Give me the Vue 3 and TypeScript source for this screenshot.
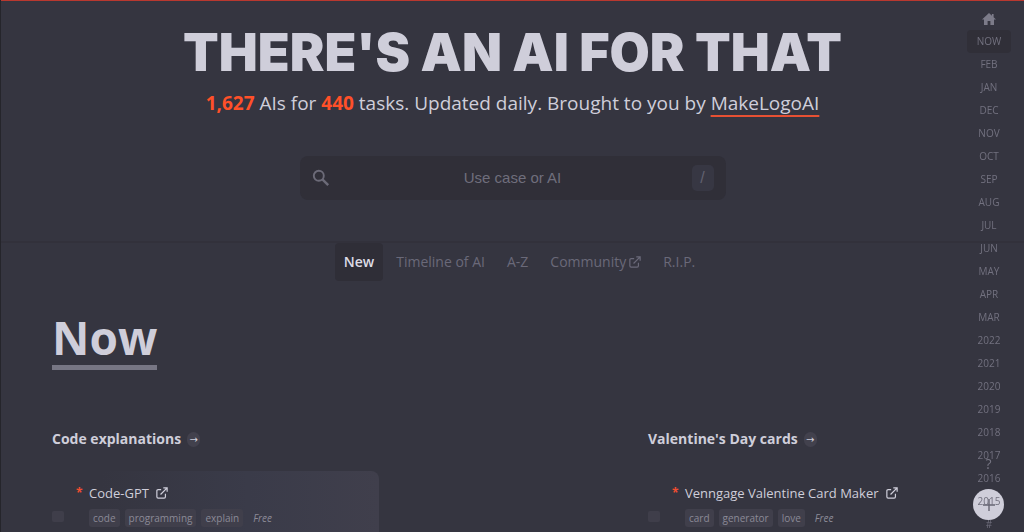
<script setup lang="ts">
import { ref } from 'vue'

interface Tool {
  id: string
  category: string
  name: string
  tags: string[]
  price: string
  featured: boolean
}

const query = ref('')
const periods: string[] = [
  'NOW', 'FEB', 'JAN', 'DEC', 'NOV', 'OCT', 'SEP', 'AUG', 'JUL', 'JUN', 'MAY',
  'APR', 'MAR', '2022', '2021', '2020', '2019', '2018', '2017', '2016', '2015', '#',
]
const tabs = [
  { label: 'New', active: true, external: false },
  { label: 'Timeline of AI', active: false, external: false },
  { label: 'A-Z', active: false, external: false },
  { label: 'Community', active: false, external: true },
  { label: 'R.I.P.', active: false, external: false },
]
const tools: Tool[] = [
  { id: 'code-gpt', category: 'Code explanations', name: 'Code-GPT', tags: ['code', 'programming', 'explain'], price: 'Free', featured: true },
  { id: 'venngage', category: "Valentine's Day cards", name: 'Venngage Valentine Card Maker', tags: ['card', 'generator', 'love'], price: 'Free', featured: false },
]
</script>

<template>
  <div class="page">
    <header class="hero">
      <h1>There's an AI for that</h1>
      <p class="tagline">
        <strong>1,627</strong> AIs for <strong>440</strong> tasks. Updated daily. Brought to you by
        <a href="#makelogo">MakeLogoAI</a>
      </p>
      <form class="search" role="search" @submit.prevent>
        <svg class="lens" viewBox="0 0 18 18" aria-hidden="true">
          <circle cx="6.8" cy="6.8" r="5" fill="none" stroke="currentColor" stroke-width="1.9" />
          <path d="M10.4 10.4L16.2 16.2" stroke="currentColor" stroke-width="2.4" />
        </svg>
        <input v-model="query" type="text" placeholder="Use case or AI" aria-label="Use case or AI">
        <kbd>/</kbd>
      </form>
    </header>

    <nav class="tabs" aria-label="Sections">
      <a v-for="tab in tabs" :key="tab.label" href="#section" :class="{ active: tab.active }">
        {{ tab.label }}<svg v-if="tab.external" class="external" viewBox="0 0 14 14" aria-hidden="true">
          <path d="M6 3H2.5Q1 3 1 4.5V11.5Q1 13 2.5 13H9.5Q11 13 11 11.5V8M5.3 8.7L13 1M8.5 1H13V5.5" />
        </svg>
      </a>
    </nav>

    <main>
      <h2>Now</h2>
      <div class="columns">
        <section v-for="tool in tools" :key="tool.id">
          <h3>
            <a href="#category">{{ tool.category }}<span class="arrow">→</span></a>
          </h3>
          <article class="tool" :class="{ featured: tool.featured }">
            <input type="checkbox" :aria-label="'Save ' + tool.name">
            <span class="star">*</span>
            <div class="info">
              <a class="name" href="#tool">{{ tool.name }}<svg class="external" viewBox="0 0 14 14" aria-hidden="true">
                <path d="M6 3H2.5Q1 3 1 4.5V11.5Q1 13 2.5 13H9.5Q11 13 11 11.5V8M5.3 8.7L13 1M8.5 1H13V5.5" />
              </svg></a>
              <div class="tags">
                <a v-for="tag in tool.tags" :key="tag" class="tag" href="#tag">{{ tag }}</a>
                <em>{{ tool.price }}</em>
              </div>
            </div>
          </article>
        </section>
      </div>
    </main>

    <div class="actions">
      <a class="help" href="#help">?</a>
      <button type="button" class="add" aria-label="Add an AI">
        <svg viewBox="0 0 14 14" aria-hidden="true"><path d="M7 1V13M1 7H13" /></svg>
      </button>
    </div>

    <nav class="rail" aria-label="Timeline">
      <a class="home" href="#home" aria-label="Home">
        <svg viewBox="0 0 14 12" aria-hidden="true">
          <path d="M7 0L0 6.4H2V12H5.6V8H8.4V12H12V6.4H14L11.6 4.2V1H9.9V2.7Z" fill="currentColor" />
        </svg>
      </a>
      <a v-for="(period, index) in periods" :key="period" href="#period" :class="{ current: index === 0 }">{{ period }}</a>
    </nav>
  </div>
</template>

<style>
body {
  margin: 0;
  overflow: hidden;
  background: #353540;
}
</style>

<style scoped>
* {
  box-sizing: border-box;
}
a {
  color: inherit;
  text-decoration: none;
}
.page {
  min-height: 100vh;
  overflow: hidden;
  border-left: 1px solid #25252b;
  background: #353540;
  color: #cfceda;
  font-family: "Open Sans", "Noto Sans", sans-serif;
}
.hero {
  display: flex;
  flex-direction: column;
  align-items: center;
  padding: 24px 0 41px;
  border-top: 1px solid #b9382f;
  border-bottom: 2px solid #32313b;
}
h1 {
  margin: 0;
  font: 900 52px/56px Inter, sans-serif;
  text-transform: uppercase;
  white-space: nowrap;
}
.tagline {
  margin: 8px 0 0;
  font-size: 19px;
  line-height: 28px;
  white-space: nowrap;
}
.tagline strong {
  color: #ff5029;
  font-weight: 700;
}
.tagline a {
  text-decoration: underline 2px #e75033;
  text-decoration-skip-ink: none;
  text-underline-offset: 5px;
}
.search {
  display: flex;
  align-items: center;
  width: 426px;
  max-width: 90%;
  height: 44px;
  margin-top: 39px;
  padding: 0 12px;
  border-radius: 8px;
  background: #302f38;
}
.lens {
  width: 18px;
  height: 18px;
  color: #6c6b78;
}
.search input {
  flex: 1;
  min-width: 0;
  padding: 0 0 2px 4px;
  border: 0;
  outline: 0;
  background: transparent;
  color: #cfceda;
  font: 15px "Liberation Sans", Arial, sans-serif;
  text-align: center;
}
.search input::placeholder {
  color: #6f6e7c;
  opacity: 1;
}
kbd {
  width: 22px;
  border-radius: 5px;
  background: #373743;
  color: #626170;
  font: 16px/26px "Liberation Sans", Arial, sans-serif;
  text-align: center;
}
.tabs {
  display: flex;
  justify-content: center;
  gap: 4px;
  padding-left: 14px;
  color: #6a6979;
  font-size: 14px;
  line-height: 38px;
}
.tabs a {
  display: flex;
  align-items: center;
  padding: 0 9px;
  white-space: nowrap;
}
.tabs .active {
  border-radius: 4px;
  background: #2f2e37;
  color: #dddce6;
  font-weight: 600;
}
.external {
  width: 12px;
  height: 12px;
  margin-left: 3px;
  fill: none;
  stroke: currentColor;
  stroke-width: 1.4;
}
main {
  padding: 28px 49px 0 51px;
}
h2 {
  width: fit-content;
  margin: 0;
  border-bottom: 5px solid #777684;
  font-size: 46px;
  font-weight: 700;
  line-height: 56px;
}
.columns {
  display: grid;
  grid-template-columns: repeat(2, minmax(0, 327px));
  justify-content: space-between;
  margin-top: 59px;
}
h3 {
  margin: 0;
  font-size: 14px;
  font-weight: 700;
  line-height: 20px;
}
h3 a {
  display: flex;
  align-items: center;
  gap: 6px;
}
.arrow {
  width: 13px;
  border-radius: 7px;
  background: #42414d;
  font-family: "DejaVu Sans", sans-serif;
  font-size: 10px;
  font-weight: 400;
  line-height: 15px;
  text-align: center;
}
.tool {
  display: flex;
  margin-top: 22px;
  padding: 12px 0 24px;
  border-radius: 8px;
}
.featured {
  background: linear-gradient(90deg, #353540 15%, #3a3b49 60%, #403f4c);
}
.tool input {
  appearance: none;
  width: 12px;
  height: 11px;
  margin: 28px 12px 0 0;
  border-radius: 2px;
  background: #3f3e4a;
}
.star {
  width: 13px;
  color: #f24d30;
  font-size: 12px;
  font-weight: 700;
  line-height: 20px;
}
.name {
  display: flex;
  align-items: center;
  font-size: 13px;
  line-height: 20px;
  white-space: nowrap;
}
.name .external {
  margin-left: 7px;
}
.tags {
  display: flex;
  gap: 5px;
  margin-top: 6px;
  color: #8b8a97;
  font-size: 10px;
  line-height: 18px;
}
.tag {
  padding: 0 4px;
  border-radius: 3px;
  background: #403f4b;
}
.tags em {
  margin-left: 5px;
}
.rail {
  position: fixed;
  top: 7px;
  right: 13px;
  display: flex;
  flex-direction: column;
  width: 44px;
  color: #72717f;
  font-size: 10px;
  line-height: 23px;
  text-align: center;
}
.home {
  display: grid;
  place-items: center;
  height: 23px;
  color: #7c7b89;
}
.home svg {
  width: 14px;
  height: 12px;
}
.current {
  border-radius: 4px;
  background: #302f38;
}
.actions {
  position: fixed;
  right: 20px;
  bottom: 12px;
  display: flex;
  flex-direction: column;
  align-items: center;
  gap: 15px;
  color: #777684;
}
.help {
  font-size: 14px;
  line-height: 20px;
}
.add {
  display: grid;
  place-items: center;
  width: 31px;
  height: 31px;
  padding: 0;
  border: 0;
  border-radius: 50%;
  background: #cfceda;
  color: #666573;
}
.add svg {
  width: 14px;
  height: 14px;
  fill: none;
  stroke: currentColor;
  stroke-width: 1.4;
}
</style>
